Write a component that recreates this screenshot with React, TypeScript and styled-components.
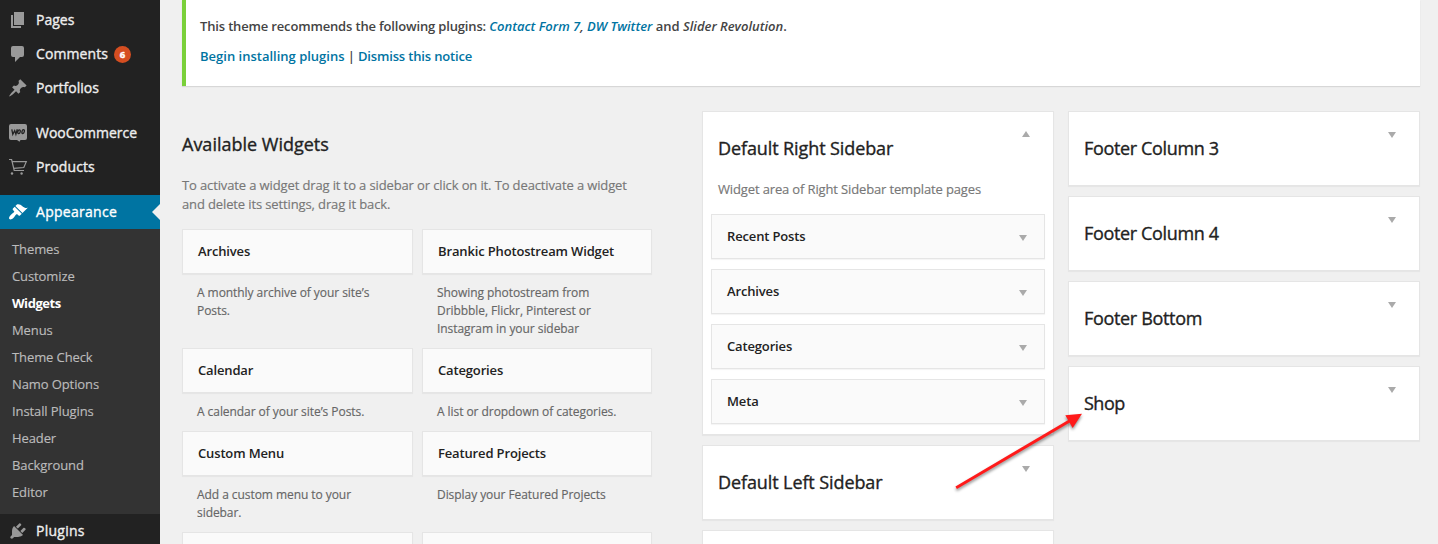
import React from 'react';
import styled, { createGlobalStyle, css } from 'styled-components';

const GlobalStyle = createGlobalStyle`
  * { box-sizing: border-box; }
  html, body { margin: 0; padding: 0; background: #f0f0f0; overflow: hidden; }
  body { font-family: "Open Sans", "Noto Sans", sans-serif; font-size: 13px; color: #444; }
  h3, h4, p, ul { margin: 0; padding: 0; }
  ul { list-style: none; }
`;

const Page = styled.div`
  position: relative;
  display: flex;
  width: 1438px;
  height: 544px;
  overflow: hidden;
  background: #f0f0f0;
`;

const SideMenu = styled.nav`
  flex: none;
  width: 160px;
  height: 544px;
  padding-top: 3px;
  background: #222;
  overflow: hidden;
`;

const MenuItem = styled.a<{ $active?: boolean; $tracking?: number }>`
  position: relative;
  display: flex;
  align-items: center;
  height: 34px;
  font-size: 14px;
  line-height: 18px;
  letter-spacing: ${p => p.$tracking ?? 0}px;
  -webkit-text-stroke: 0.35px currentColor;
  color: ${p => (p.$active ? '#fff' : '#eee')};
  background: ${p => (p.$active ? '#0074a2' : 'transparent')};
  ${p =>
    p.$active &&
    css`
      &::after {
        content: '';
        position: absolute;
        right: 0;
        top: 9px;
        border: 8px solid transparent;
        border-left: 0;
        border-right-color: #f0f0f0;
      }
    `}
`;

const MenuIcon = styled.svg<{ $active?: boolean }>`
  flex: none;
  width: 20px;
  height: 20px;
  margin: 0 8px;
  fill: ${p => (p.$active ? '#fff' : '#999')};
`;

const Separator = styled.div`
  height: 11px;
`;

const CountBadge = styled.span`
  width: 17px;
  height: 17px;
  margin-left: 6px;
  border-radius: 9px;
  background: #d54e21;
  color: #fff;
  font-size: 9.5px;
  font-weight: 700;
  line-height: 17px;
  letter-spacing: 0;
  text-align: center;
`;

const SubMenu = styled.ul`
  height: 285px;
  padding: 7px 12px 8px;
  background: #333;
`;

const SubItem = styled.li<{ $current?: boolean }>`
  height: 27px;
  font-size: 13px;
  line-height: 27px;
  font-weight: ${p => (p.$current ? 700 : 400)};
  color: ${p => (p.$current ? '#fff' : '#bbb')};
  letter-spacing: ${p => (p.$current ? '-0.45px' : '-0.1px')};
  -webkit-text-stroke: ${p => (p.$current ? '0' : '0.15px')} currentColor;
`;

const Content = styled.main`
  flex: 1;
  min-width: 0;
  display: flex;
  flex-direction: column;
  padding: 0 18px 0 22px;
`;

const Notice = styled.section`
  flex: none;
  height: 86px;
  padding: 17px 14px 0;
  border-left: 4px solid #7ad03a;
  background: #fff;
  box-shadow: 0 1px 1px rgba(0, 0, 0, 0.1);
  font-weight: 600;
  line-height: 19px;
`;

const NoticeLine = styled.p`
  margin-bottom: 11px;
`;

const Tight = styled.span`
  letter-spacing: -0.16px;
`;

const Link = styled.a`
  color: #0074a2;
`;

const Columns = styled.div`
  display: flex;
  margin-top: 25px;
`;

const Available = styled.section`
  flex: none;
  width: 470px;
  margin-right: 50px;
`;

const Title = styled.h3<{ $tracking?: number }>`
  font-size: 18px;
  font-weight: 400;
  line-height: 26px;
  letter-spacing: ${p => p.$tracking ?? 0}px;
  -webkit-text-stroke: 0.35px currentColor;
  color: #222;
`;

const AvailableTitle = styled(Title)`
  margin-top: 20px;
`;

const Intro = styled.p`
  margin: 19px 0 15px;
  line-height: 19px;
  letter-spacing: -0.125px;
  white-space: nowrap;
  -webkit-text-stroke: 0.15px currentColor;
  color: #777;
`;

const WidgetGrid = styled.div`
  display: grid;
  grid-template-columns: 231px 230px;
  column-gap: 9px;
`;

const WidgetTop = styled.div`
  display: flex;
  align-items: center;
  justify-content: space-between;
  height: 45px;
  padding: 0 17px 0 15px;
  border: 1px solid #e5e5e5;
  background: #fafafa;
  box-shadow: 0 1px 1px rgba(0, 0, 0, 0.04);
`;

const WidgetName = styled.h4`
  font-size: 13px;
  font-weight: 600;
  line-height: 19px;
  letter-spacing: -0.15px;
  color: #222;
`;

const WidgetText = styled.p`
  padding: 10px 15px;
  font-size: 12px;
  line-height: 18px;
  letter-spacing: -0.06px;
  -webkit-text-stroke: 0.15px currentColor;
  color: #666;
`;

const AreaColumn = styled.div`
  flex: none;
  display: flex;
  flex-direction: column;
  gap: 10px;
  width: 352px;

  & + & {
    margin-left: 14px;
  }
`;

const Area = styled.section`
  flex: none;
  min-height: 75px;
  padding: 0 8px 10px;
  border: 1px solid #e5e5e5;
  background: #fff;
  box-shadow: 0 1px 1px rgba(0, 0, 0, 0.04);
`;

const AreaHead = styled.div`
  display: flex;
  justify-content: space-between;
  padding: 23px 15px 0 7px;
`;

const AreaText = styled.p`
  margin: 19px 7px 15px;
  line-height: 19px;
  letter-spacing: -0.14px;
  -webkit-text-stroke: 0.15px currentColor;
  color: #777;
`;

const WidgetList = styled.div`
  display: flex;
  flex-direction: column;
  gap: 10px;
`;

const Toggle = styled.svg<{ $offset: number }>`
  flex: none;
  width: 8px;
  height: 6px;
  margin-top: ${p => p.$offset}px;
  fill: #aaa;
`;

const Pointer = styled.svg`
  position: absolute;
  left: 940px;
  top: 400px;
  width: 160px;
  height: 104px;
  filter: drop-shadow(0 2px 1.5px rgba(0, 0, 0, 0.45));
`;

const PagesIcon = () => (
  <MenuIcon viewBox="0 0 20 20">
    <path d="M6 2h10v13H6zM3 5h2v11h8v2H3z" />
  </MenuIcon>
);
const CommentsIcon = () => (
  <MenuIcon viewBox="0 0 20 20">
    <path d="M5 2h9q2 0 2 2v7q0 2-2 2h-2l-5 5v-5H5q-2 0-2-2V4q0-2 2-2z" />
  </MenuIcon>
);
const PinIcon = () => (
  <MenuIcon viewBox="0 0 20 20">
    <path d="M10.44 3.02l1.82-1.82 6.36 6.35-1.83 1.82c-1.05-.68-2.48-.57-3.41.36l-.75.75c-.92.93-1.04 2.35-.35 3.41l-1.83 1.82-2.41-2.41-2.8 2.79c-.42.42-3.38 2.71-3.8 2.29s1.86-3.39 2.28-3.81l2.79-2.79L4.1 9.36l1.83-1.82c1.05.69 2.48.57 3.4-.36l.75-.75c.93-.92 1.05-2.35.36-3.41z" />
  </MenuIcon>
);
const WooIcon = () => (
  <MenuIcon viewBox="0 0 20 20">
    <path d="M3 1h14q2 0 2 2v12q0 2-2 2h-4.500L11.500 18.700 9 17H3q-2 0-2-2V3q0-2 2-2z" />
    <path
      d="M3.800 6.300l1 5 1.900-3.700 1.200 3.600L9.300 6.300M11.200 6.900q1.400 0 1 1.900t-1.500 1.900q-1.300-.2-.8-2t1.300-1.800zM15.300 6.700q1.400 0 1 1.900t-1.500 1.900q-1.300-.2-.8-2t1.300-1.800z"
      fill="none"
      stroke="#222"
      strokeWidth="1.300"
    />
  </MenuIcon>
);
const CartIcon = () => (
  <MenuIcon viewBox="0 0 20 20">
    <path
      d="M1 2.500h2.600l2.600 11H16M4.200 4.700H18.300L15.800 10.500 5.600 11.300"
      fill="none"
      stroke="#999"
      strokeWidth="1.200"
    />
    <circle cx="4" cy="16.500" r="1.200" />
    <circle cx="13.600" cy="16.500" r="1.200" />
  </MenuIcon>
);
const BrushIcon = () => (
  <MenuIcon $active viewBox="0 0 20 20">
    <path d="M14.480 11.060L7.410 3.990l1.500-1.500c.5-.56 2.300-.47 3.510.32 1.210.8 1.430 1.280 2.910 2.100 1.180.64 2.450 1.260 4.450.85zm-.71.71L6.700 4.700 4.930 6.470c-.39.39-.39 1.020 0 1.410l1.060 1.060c.39.39.39 1.030 0 1.420-.6.6-1.430 1.110-2.210 1.690-.35.26-.7.530-1.010.84C1.430 14.230.400 16.080 1.400 17.070c.99 1 2.840-.03 4.180-1.360.31-.31.580-.660.850-1.020.57-.78 1.080-1.610 1.690-2.210.39-.39 1.020-.39 1.410 0l1.060 1.060c.39.39 1.020.39 1.410 0z" />
  </MenuIcon>
);
const PlugIcon = () => (
  <MenuIcon viewBox="0 0 20 20">
    <path d="M13.110 4.360L9.870 7.600 8 5.730l3.240-3.240c.35-.34 1.050-.2 1.560.32.52.51.66 1.210.310 1.550zm-8 1.770l.91-1.120 9.010 9.010-1.190.84c-.71.71-2.630 1.160-3.820 1.160H6.140L4.900 17.260c-.59.59-1.540.59-2.120 0-.59-.58-.59-1.530 0-2.120l1.240-1.240v-3.880c0-1.130.4-3.190 1.090-3.890zm7.260 3.970l3.240-3.240c.34-.35 1.040-.21 1.550.31.52.51.66 1.210.31 1.550l-3.240 3.250z" />
  </MenuIcon>
);

const Caret = ({ up, offset = 2 }: { up?: boolean; offset?: number }) => (
  <Toggle $offset={offset} viewBox="0 0 8 6">
    <path d={up ? 'M0 6h8L4 0z' : 'M0 0h8L4 6z'} />
  </Toggle>
);

const subItems = ['Themes', 'Customize', 'Widgets', 'Menus', 'Theme Check', 'Namo Options', 'Install Plugins', 'Header', 'Background', 'Editor'];

const available: [string, React.ReactNode][] = [
  ['Archives', 'A monthly archive of your site’s Posts.'],
  ['Brankic Photostream Widget', <>Showing photostream from<br />Dribbble, Flickr, Pinterest or<br />Instagram in your sidebar</>],
  ['Calendar', 'A calendar of your site’s Posts.'],
  ['Categories', 'A list or dropdown of categories.'],
  ['Custom Menu', <>Add a custom menu to your<br />sidebar.</>],
  ['Featured Projects', 'Display your Featured Projects'],
  ['', ''],
  ['', ''],
];

const footerAreas: [string, number][] = [
  ['Footer Column 3', -0.35],
  ['Footer Column 4', -0.35],
  ['Footer Bottom', -0.33],
  ['Shop', -0.5],
];

const SidebarArea = ({ title, tracking }: { title: string; tracking: number }) => (
  <Area>
    <AreaHead>
      <Title $tracking={tracking}>{title}</Title>
      <Caret offset={-3} />
    </AreaHead>
  </Area>
);

export default function App() {
  return (
    <Page>
      <GlobalStyle />
      <SideMenu>
        <MenuItem><PagesIcon />Pages</MenuItem>
        <MenuItem $tracking={0.1}><CommentsIcon />Comments<CountBadge>6</CountBadge></MenuItem>
        <MenuItem><PinIcon />Portfolios</MenuItem>
        <Separator />
        <MenuItem><WooIcon />WooCommerce</MenuItem>
        <MenuItem $tracking={0.1}><CartIcon />Products</MenuItem>
        <Separator />
        <MenuItem $active $tracking={0.28}><BrushIcon />Appearance</MenuItem>
        <SubMenu>
          {subItems.map(name => (
            <SubItem key={name} $current={name === 'Widgets'}>{name}</SubItem>
          ))}
        </SubMenu>
        <MenuItem $tracking={0.25}><PlugIcon />Plugins</MenuItem>
      </SideMenu>
      <Content>
        <Notice>
          <NoticeLine>
            <Tight>This theme recommends the following plugins: </Tight>
            <em><Link>Contact Form 7</Link>, <Link>DW Twitter</Link></em> and <em>Slider Revolution</em>.
          </NoticeLine>
          <NoticeLine>
            <Link>Begin installing plugins</Link><Tight> | <Link>Dismiss this notice</Link></Tight>
          </NoticeLine>
        </Notice>
        <Columns>
          <Available>
            <AvailableTitle>Available Widgets</AvailableTitle>
            <Intro>
              To activate a widget drag it to a sidebar or click on it. To deactivate a widget<br />
              and delete its settings, drag it back.
            </Intro>
            <WidgetGrid>
              {available.map(([name, text], i) => (
                <div key={i}>
                  <WidgetTop><WidgetName>{name}</WidgetName></WidgetTop>
                  <WidgetText>{text}</WidgetText>
                </div>
              ))}
            </WidgetGrid>
          </Available>
          <AreaColumn>
            <Area>
              <AreaHead>
                <Title $tracking={-0.1}>Default Right Sidebar</Title>
                <Caret up offset={-4} />
              </AreaHead>
              <AreaText>Widget area of Right Sidebar template pages</AreaText>
              <WidgetList>
                {['Recent Posts', 'Archives', 'Categories', 'Meta'].map(name => (
                  <WidgetTop key={name}>
                    <WidgetName>{name}</WidgetName>
                    <Caret />
                  </WidgetTop>
                ))}
              </WidgetList>
            </Area>
            <SidebarArea title="Default Left Sidebar" tracking={-0.1} />
            <Area />
          </AreaColumn>
          <AreaColumn>
            {footerAreas.map(([title, tracking]) => (
              <SidebarArea key={title} title={title} tracking={tracking} />
            ))}
          </AreaColumn>
        </Columns>
      </Content>
      <Pointer viewBox="940 400 160 104">
        <path d="M956.200 487.700L1072 419.500" stroke="#ff1a1a" strokeWidth="2.900" />
        <path d="M1082 413.700L1065.300 415.300L1072.700 428z" fill="#ff1a1a" />
      </Pointer>
    </Page>
  );
}
